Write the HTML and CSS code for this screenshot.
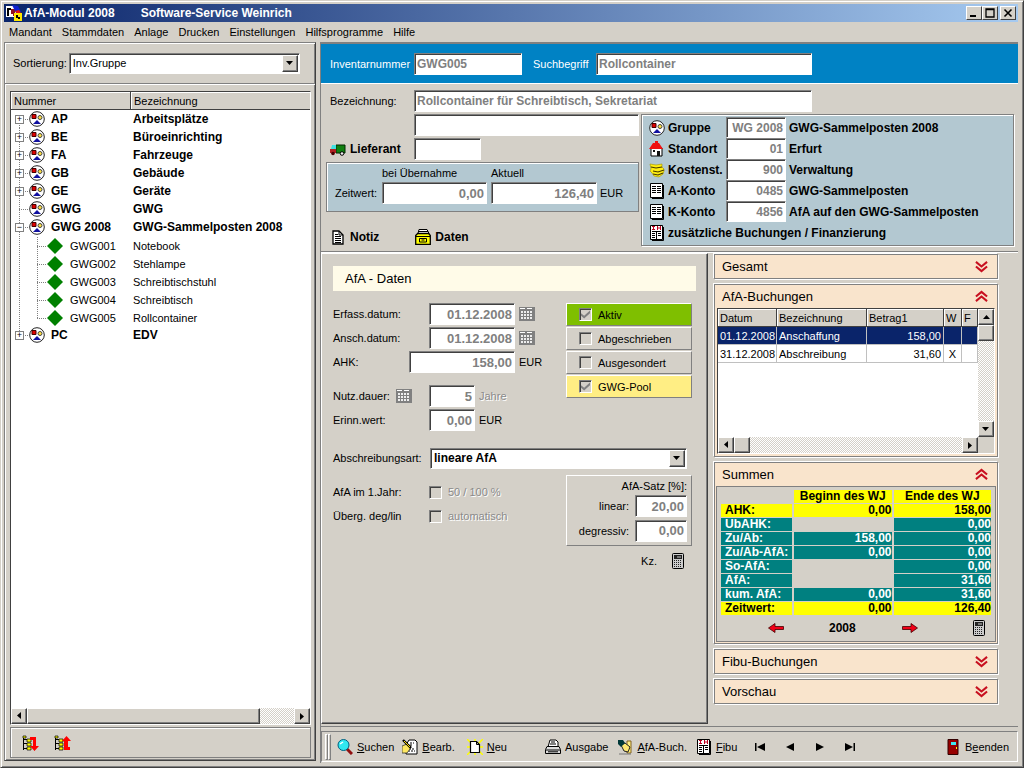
FILE: index.html
```html
<!DOCTYPE html>
<html lang="de">
<head>
<meta charset="utf-8">
<title>AfA-Modul 2008</title>
<link rel="stylesheet" href="styles.css">
</head>
<body>
<svg class="defs" aria-hidden="true">
  <symbol id="group" viewBox="0 0 16 16"><circle cx="8" cy="8" r="7.3" fill="#fff" stroke="#222"/><path d="M3 3.500h4v4H3z" fill="#e00000" stroke="#400"/><circle cx="11" cy="6.500" r="2" fill="#ffe040" stroke="#444"/><path d="M8 9l4 4H4z" fill="#1010a0"/></symbol>
  <symbol id="diamond" viewBox="0 0 16 16"><path d="M8 0l8 8-8 8-8-8z" fill="#008000"/></symbol>
  <symbol id="sheet" viewBox="0 0 16 16"><path d="M1.500.5h12v14h-12z" fill="#fff" stroke="#000"/><path d="M14.500 2v13.500H3" fill="none" stroke="#000"/><path d="M3 3.500h4m1 0h4M3 5.500h4m1 0h4M3 7.500h4m1 0h4M3 9.500h4m1 0h4" stroke="#000"/></symbol>
  <symbol id="ledger" viewBox="0 0 16 16"><path d="M1.500.5h12v14h-12z" fill="#fff" stroke="#000"/><path d="M14.500 2v13.500H3" fill="none" stroke="#000"/><path d="M3 1.500h3M4.500 1v4M3 4.500h3M8.500 1v4M11.500 1v4M8 3h4" fill="none" stroke="#c00020"/><path d="M3 6.500h9M7.500 7v7M3 8.500h3m3 0h3M3 10.500h3m3 0h3M3 12.500h3" stroke="#000"/></symbol>
  <symbol id="calendar" viewBox="0 0 16 16"><path d="M0 1h16v14H0z" fill="#808080"/><path d="M1 2h5v1H1zM8 2h5v1H8z" fill="#fff"/><path d="M2 5h2v2H2zm3 0h2v2H5zm3 0h2v2H8zm3 0h2v2h-2zM2 8h2v2H2zm3 0h2v2H5zm3 0h2v2H8zm3 0h2v2h-2zM2 11h2v2H2zm3 0h2v2H5zm3 0h2v2H8zm3 0h2v2h-2z" fill="#eee"/></symbol>
  <symbol id="calc" viewBox="0 0 12 16"><rect x=".5" y=".5" width="11" height="15" rx="1" fill="#ccc" stroke="#000"/><path d="M2 2h8v4H2z" fill="#222"/><path d="M5 4h4" stroke="#ccc"/><path d="M2 7.500h8M2 9.500h8M2 11.500h8M2 13.500h8" stroke="#222" stroke-dasharray="1 1"/></symbol>
  <symbol id="down" viewBox="0 0 14 14"><path d="M1 2l6 5 6-5M1 7l6 5 6-5" fill="none" stroke="#c81020" stroke-width="2.200"/></symbol>
  <symbol id="up" viewBox="0 0 14 14"><path d="M1 7l6-5 6 5M1 12l6-5 6 5" fill="none" stroke="#c81020" stroke-width="2.200"/></symbol>
  <symbol id="tree" viewBox="0 0 16 16"><path d="M1.500 1v14M1 4.500h4M1 8.500h4M1 13.500h4" stroke="#000" fill="none"/><path d="M1 1h3v2H1zM5 4h4v3H5zM5 8h4v3H5zM5 12h4v3H5z" fill="#ff0" stroke="#000" stroke-width=".7"/></symbol>
  <symbol id="tri" viewBox="0 0 8 8"><path d="M0 2h7L3.500 6z" fill="#000"/></symbol>
  <symbol id="arrow" viewBox="0 0 16 10"><path d="M.5 5L7 .5V3.500h8.500v3H7v3z" fill="#f00018" stroke="#400" stroke-width=".8"/></symbol>
</svg>

<header class="title">
  <svg class="logo" viewBox="0 0 16 16"><path d="M0 1h10v11H0z" fill="#fff"/><path d="M1 3h4v2H3v6H1z" fill="#000"/><path d="M5 4h4v7H7V9H5z" fill="#901020"/><path d="M6 0l6 1 3 6-5 1z" fill="#1020d0"/><path d="M9 6l4-1 2 3-3 2z" fill="#e01010"/><path d="M8 8h8v8H8z" fill="#ffe800"/><path d="M10 10h2v2h2v2h-2v-1h-2z" fill="#000"/></svg>
  <h1>AfA-Modul 2008</h1><span class="company">Software-Service Weinrich</span>
  <div class="winbtns">
    <button aria-label="Minimieren"><svg viewBox="0 0 10 10"><path d="M1 8h6" stroke="#000" stroke-width="2"/></svg></button>
    <button aria-label="Maximieren"><svg viewBox="0 0 10 10"><path d="M1 1h8v8H1zM1 1.500h8" fill="none" stroke="#000" stroke-width="1.300"/></svg></button>
    <button class="close" aria-label="Schließen"><svg viewBox="0 0 10 10"><path d="M1.500 1.500l7 7m0-7l-7 7" stroke="#000" stroke-width="1.600"/></svg></button>
  </div>
</header>
<nav class="menu"><button>Mandant</button><button>Stammdaten</button><button>Anlage</button><button>Drucken</button><button>Einstellungen</button><button>Hilfsprogramme</button><button>Hilfe</button></nav>

<main class="work">
  <aside class="side">
    <div class="sort"><label for="sort">Sortierung:</label>
      <span class="combo"><select id="sort"><option>Inv.Gruppe</option></select><span class="drop"><svg><use href="#tri"/></svg></span></span></div>
    <div class="treebox">
      <div class="treehead"><span>Nummer</span><span>Bezeichnung</span></div>
      <ul class="tree">
        <li class="first"><i class="rail"><b>+</b></i><svg><use href="#group"/></svg><strong>AP</strong><strong>Arbeitsplätze</strong></li>
        <li><i class="rail"><b>+</b></i><svg><use href="#group"/></svg><strong>BE</strong><strong>Büroeinrichting</strong></li>
        <li><i class="rail"><b>+</b></i><svg><use href="#group"/></svg><strong>FA</strong><strong>Fahrzeuge</strong></li>
        <li><i class="rail"><b>+</b></i><svg><use href="#group"/></svg><strong>GB</strong><strong>Gebäude</strong></li>
        <li><i class="rail"><b>+</b></i><svg><use href="#group"/></svg><strong>GE</strong><strong>Geräte</strong></li>
        <li><i class="rail"></i><svg><use href="#group"/></svg><strong>GWG</strong><strong>GWG</strong></li>
        <li><i class="rail"><b>−</b></i><svg><use href="#group"/></svg><strong>GWG 2008</strong><strong>GWG-Sammelposten 2008</strong></li>
        <li class="leaf"><i class="rail line"></i><i class="rail"></i><svg><use href="#diamond"/></svg><span>GWG001</span><span>Notebook</span></li>
        <li class="leaf"><i class="rail line"></i><i class="rail"></i><svg><use href="#diamond"/></svg><span>GWG002</span><span>Stehlampe</span></li>
        <li class="leaf"><i class="rail line"></i><i class="rail"></i><svg><use href="#diamond"/></svg><span>GWG003</span><span>Schreibtischstuhl</span></li>
        <li class="leaf"><i class="rail line"></i><i class="rail"></i><svg><use href="#diamond"/></svg><span>GWG004</span><span>Schreibtisch</span></li>
        <li class="leaf"><i class="rail line"></i><i class="rail end"></i><svg><use href="#diamond"/></svg><span>GWG005</span><span>Rollcontainer</span></li>
        <li><i class="rail end"><b>+</b></i><svg><use href="#group"/></svg><strong>PC</strong><strong>EDV</strong></li>
      </ul>
      <div class="hscroll"><button class="sb left" aria-label="Links"><svg><use href="#tri"/></svg></button><span class="thumb wide"></span><button class="sb right" aria-label="Rechts"><svg><use href="#tri"/></svg></button></div>
    </div>
    <div class="treetools">
      <button aria-label="Alle öffnen"><svg viewBox="0 0 17 16"><use href="#tree" width="16" height="16"/><path d="M8 2h6v9h3l-4.500 5L8 11h3V5H8z" fill="#f00"/></svg></button>
      <button aria-label="Alle schließen"><svg viewBox="0 0 17 16"><use href="#tree" width="16" height="16"/><path d="M8 6l4.500-5L17 6h-3v6h2v3h-6V6z" fill="#f00"/></svg></button>
    </div>
  </aside>

  <section class="content">
    <div class="banner"><label for="inv">Inventarnummer</label><input id="inv" class="w108" readonly value="GWG005"><label class="second" for="such">Suchbegriff</label><input id="such" class="w216" readonly value="Rollcontainer"></div>

    <div class="master">
      <div class="line"><label class="lead" for="bez">Bezeichnung:</label><input id="bez" class="w398" readonly value="Rollcontainer für Schreibtisch, Sekretariat"></div>
      <div class="halves">
        <div class="half">
          <div class="line"><span class="lead"></span><input class="grow" aria-label="Bezeichnung 2"></div>
          <div class="line"><label class="lead strong" for="lief"><svg class="ic" viewBox="0 0 16 16"><path d="M6 4h9v8H6z" fill="#108010" stroke="#002800"/><path d="M2 4h4v4H1z" fill="#40e0e0"/><path d="M0 8h6v4H0z" fill="#b02020"/><circle cx="3" cy="12.500" r="1.800" fill="#400"/><circle cx="12" cy="12.500" r="1.800" fill="#eee" stroke="#000"/></svg>Lieferant</label><input id="lief" class="w67"></div>
          <div class="values">
            <span></span><label for="ueb">bei Übernahme</label><label for="akt">Aktuell</label><span></span>
            <span>Zeitwert:</span><input id="ueb" class="num" readonly value="0,00"><input id="akt" class="num" readonly value="126,40"><span>EUR</span>
          </div>
          <div class="links">
            <button><svg class="ic" viewBox="0 0 16 16"><path d="M3 2h6l4 4v9H3z" fill="#fff" stroke="#000" stroke-width="1.300"/><path d="M9 2v4h4" fill="none" stroke="#000"/><path d="M5 5.500h3M5 7.500h6M5 9.500h6M5 11.500h6M5 13.500h6" stroke="#000"/></svg>Notiz</button>
            <button><svg class="ic" viewBox="0 0 16 16"><path d="M4 .5h8l2 4H3z" fill="#fff" stroke="#000"/><path d="M4 2.500h9" stroke="#000"/><path d="M.7 6.500l2-2h11l1.600 2v9H.7z" fill="#ff0" stroke="#000" stroke-width="1.300"/><path d="M1 7.500h14M4.500 9.500h7v3.500h-7zM6.500 11h3" fill="none" stroke="#000"/></svg>Daten</button>
          </div>
        </div>
        <div class="refs">
          <label for="r1"><svg class="ic"><use href="#group"/></svg>Gruppe</label><input id="r1" class="num" readonly value="WG 2008"><strong>GWG-Sammelposten 2008</strong>
          <label for="r2"><svg class="ic" viewBox="0 0 16 16"><path d="M2 7h11v8H2z" fill="#fff" stroke="#000"/><path d="M0 8l4-6h2V0h3v2h1l4 6z" fill="#f01010"/><path d="M4 9h2v2H4zM8 10h3v5H8z" fill="#111"/></svg>Standort</label><input id="r2" class="num" readonly value="01"><strong>Erfurt</strong>
          <label for="r3"><svg class="ic" viewBox="0 0 16 16"><path d="M1 2l6 1 6-1v3l2 2v2l-1 3-4 3-5-1-2-3-2-2 1-2z" fill="#ffee10" stroke="#a09000" stroke-width=".6"/><path d="M2 5l5 1 6-1M4 9l5 1 6-2M4 12l5 1 5-2" fill="none" stroke="#443800" stroke-width="1.200"/></svg>Kostenst.</label><input id="r3" class="num" readonly value="900"><strong>Verwaltung</strong>
          <label for="r4"><svg class="ic"><use href="#sheet"/></svg>A-Konto</label><input id="r4" class="num" readonly value="0485"><strong>GWG-Sammelposten</strong>
          <label for="r5"><svg class="ic"><use href="#sheet"/></svg>K-Konto</label><input id="r5" class="num" readonly value="4856"><strong>AfA auf den GWG-Sammelposten</strong>
          <button class="extra"><svg class="ic"><use href="#ledger"/></svg>zusätzliche Buchungen / Finanzierung</button>
        </div>
      </div>
    </div>

    <div class="lower">
      <section class="detail">
        <h2>AfA - Daten</h2>
        <div class="detailcols">
          <div class="fields">
            <div class="field"><label for="f1">Erfass.datum:</label><input id="f1" class="num w86" readonly value="01.12.2008"><svg class="ic"><use href="#calendar"/></svg></div>
            <div class="field"><label for="f2">Ansch.datum:</label><input id="f2" class="num w86" readonly value="01.12.2008"><svg class="ic"><use href="#calendar"/></svg></div>
            <div class="field"><label class="short" for="f3">AHK:</label><input id="f3" class="num w106" readonly value="158,00"><span>EUR</span></div>
            <div class="field gap"><label for="f4">Nutz.dauer: <svg class="ic"><use href="#calendar"/></svg></label><input id="f4" class="num w46" readonly value="5"><span class="dim">Jahre</span></div>
            <div class="field"><label for="f5">Erinn.wert:</label><input id="f5" class="num w46" readonly value="0,00"><span>EUR</span></div>
          </div>
          <div class="flags">
            <label class="green"><input type="checkbox" checked>Aktiv</label>
            <label><input type="checkbox">Abgeschrieben</label>
            <label><input type="checkbox">Ausgesondert</label>
            <label class="yellow"><input type="checkbox" checked>GWG-Pool</label>
          </div>
        </div>
        <div class="field method"><label for="art">Abschreibungsart:</label><span class="combo"><select id="art" class="bold"><option>lineare AfA</option></select><span class="drop"><svg><use href="#tri"/></svg></span></span></div>
        <div class="detailcols">
          <div class="fields opts">
            <div class="field"><span class="cap">AfA im 1.Jahr:</span><label class="dim"><input type="checkbox">50 / 100 %</label></div>
            <div class="field"><span class="cap">Überg. deg/lin</span><label class="dim"><input type="checkbox">automatisch</label></div>
          </div>
          <div class="ratecol">
            <div class="rates"><span class="head">AfA-Satz [%]:</span><label for="lin">linear:</label><input id="lin" class="num" readonly value="20,00"><label for="deg">degressiv:</label><input id="deg" class="num" readonly value="0,00"></div>
            <div class="kz">Kz.<button aria-label="Rechner"><svg class="calc"><use href="#calc"/></svg></button></div>
          </div>
        </div>
      </section>

      <aside class="cards">
        <section class="card"><button class="cardhead">Gesamt<svg><use href="#down"/></svg></button></section>
        <section class="card"><button class="cardhead">AfA-Buchungen<svg><use href="#up"/></svg></button>
          <div class="grid">
            <div class="gridmain">
              <table class="bookings">
                <colgroup><col class="c1"><col class="c2"><col class="c3"><col class="c4"><col></colgroup>
                <thead><tr><th>Datum</th><th>Bezeichnung</th><th>Betrag1</th><th>W</th><th>F</th></tr></thead>
                <tbody><tr class="sel"><td>01.12.2008</td><td>Anschaffung</td><td class="r">158,00</td><td></td><td></td></tr>
                <tr><td>31.12.2008</td><td>Abschreibung</td><td class="r">31,60</td><td class="c">X</td><td></td></tr></tbody>
              </table>
              <div class="hscroll"><button class="sb left" aria-label="Links"><svg><use href="#tri"/></svg></button><span class="thumb"></span><button class="sb right" aria-label="Rechts"><svg><use href="#tri"/></svg></button></div>
            </div>
            <div class="vscroll"><button class="sb top" aria-label="Hoch"><svg><use href="#tri"/></svg></button><span class="thumb"></span><button class="sb bottom" aria-label="Runter"><svg><use href="#tri"/></svg></button></div>
          </div>
        </section>
        <section class="card"><button class="cardhead">Summen<svg><use href="#up"/></svg></button>
          <div class="sums">
            <table>
              <tr class="y"><td class="none"></td><th scope="col">Beginn des WJ</th><th scope="col">Ende des WJ</th></tr>
              <tr class="y"><th>AHK:</th><td>0,00</td><td>158,00</td></tr>
              <tr><th>UbAHK:</th><td class="none"></td><td>0,00</td></tr>
              <tr><th>Zu/Ab:</th><td>158,00</td><td>0,00</td></tr>
              <tr><th>Zu/Ab-AfA:</th><td>0,00</td><td>0,00</td></tr>
              <tr><th>So-AfA:</th><td class="none"></td><td>0,00</td></tr>
              <tr><th>AfA:</th><td class="none"></td><td>31,60</td></tr>
              <tr><th>kum. AfA:</th><td>0,00</td><td>31,60</td></tr>
              <tr class="y"><th>Zeitwert:</th><td>0,00</td><td>126,40</td></tr>
            </table>
            <div class="year"><button aria-label="Vorjahr"><svg class="arr"><use href="#arrow"/></svg></button><strong>2008</strong><button aria-label="Folgejahr"><svg class="arr flip"><use href="#arrow"/></svg></button><button class="last" aria-label="Rechner"><svg class="calc"><use href="#calc"/></svg></button></div>
          </div>
        </section>
        <section class="card"><button class="cardhead">Fibu-Buchungen<svg><use href="#down"/></svg></button></section>
        <section class="card"><button class="cardhead">Vorschau<svg><use href="#down"/></svg></button></section>
      </aside>
    </div>

    <footer class="tools">
      <i class="grip"></i><i class="grip"></i>
      <button class="t1"><svg class="ic" viewBox="0 0 16 16"><path d="M10 10l5 5" stroke="#901010" stroke-width="3"/><circle cx="6.500" cy="6" r="5.500" fill="#30e8f0" stroke="#006080"/><path d="M3 5l3-2" stroke="#fff" stroke-width="1.500"/></svg><span><u>S</u>uchen</span></button>
      <button class="t2"><svg class="ic" viewBox="0 0 16 16"><path d="M7 1h6l2 2v12H4V6z" fill="#fff" stroke="#000"/><path d="M8 4h4M8 6h3M7 10h6M6 12h7" stroke="#000" stroke-dasharray="2 1"/><path d="M0 7l5-2 4 2-1 3-3 4H0z" fill="#ffe860" stroke="#333" stroke-width=".8"/><path d="M1 1l8 8" stroke="#000" stroke-width="2.400"/><path d="M2 2l6 6" stroke="#ffe000"/></svg><span><u>B</u>earb.</span></button>
      <button class="t3"><svg class="ic" viewBox="0 0 16 16"><path d="M0 0l16 16M16 0L0 16M8 0v16M0 8h16" stroke="#ff0" stroke-width="1.500"/><path d="M3.500 2.500h6l3 3v8h-9z" fill="#fff" stroke="#000" stroke-width="1.200"/><path d="M9.500 2.500v3h3" fill="none" stroke="#000"/></svg><span><u>N</u>eu</span></button>
      <button class="t4"><svg class="ic" viewBox="0 0 16 16"><path d="M5 1h6l2 2v5H3z" fill="#fff" stroke="#000"/><path d="M6 3h4M5 5h6" stroke="#000"/><path d="M2 7.500h12l1.500 3v4H.5v-4z" fill="#ddd" stroke="#000"/><path d="M1 11h14M3 12.800h10" stroke="#000"/></svg><span>Aus<u>g</u>abe</span></button>
      <button class="t5"><svg class="ic" viewBox="0 0 16 16"><path d="M10 2h4v12h-4z" fill="#fff080" stroke="#806020"/><path d="M4 6l4-2 5 4-2 5-4-1z" fill="#ffe870" stroke="#222"/><path d="M1 1h5l2 3-4 4-3-3z" fill="#003838"/><path d="M2 15h12" stroke="#777"/></svg><span><u>A</u>fA-Buch.</span></button>
      <button class="t6"><svg class="ic"><use href="#ledger"/></svg><span><u>F</u>ibu</span></button>
      <div class="navset">
        <button aria-label="Erster"><svg viewBox="0 0 12 8"><path d="M1 0h1.500v8H1zM11 0v8L3 4z"/></svg></button>
        <button aria-label="Zurück"><svg viewBox="0 0 12 8"><path d="M10 0v8L2 4z"/></svg></button>
        <button aria-label="Weiter"><svg viewBox="0 0 12 8"><path d="M2 0v8l8-4z"/></svg></button>
        <button aria-label="Letzter"><svg viewBox="0 0 12 8"><path d="M1 0v8l8-4zM9.500 0H11v8H9.500z"/></svg></button>
      </div>
      <button class="exit"><svg class="ic" viewBox="0 0 16 16"><path d="M3 .5h10v15H3z" fill="#980000" stroke="#300"/><path d="M6 3h5v3H6z" fill="#40e8f0"/><path d="M11 8h1v2h-1z" fill="#ff0"/></svg><span>B<u>e</u>enden</span></button>
    </footer>
  </section>
</main>
</body>
</html>
```

FILE: styles.css
```css
:root {
  --face: #d4d0c8;
  --shade: #808080;
  --dark: #404040;
  --pane: #b3c8d1;
  --navy: #0a246a;
}

* { box-sizing: border-box; }

body {
  margin: 0;
  min-height: 100vh;
  padding: 3px 5px 4px 3px;
  border: 1px solid;
  border-color: var(--face) var(--dark) var(--dark) var(--face);
  box-shadow: inset 1px 1px 0 #fff, inset -1px -1px 0 var(--shade);
  background: var(--face);
  color: #000;
  font: 11px/14px "Liberation Sans", Arial, sans-serif;
  display: flex;
  flex-direction: column;
}

button, input, select { font: inherit; color: inherit; }
button { margin: 0; padding: 0; border: 0; background: none; }
svg { display: block; flex: none; }
label, button { white-space: nowrap; }
strong, .strong { font-weight: bold; font-size: 12px; }
.defs { position: absolute; width: 0; height: 0; }
.ic { width: 16px; height: 16px; }
.calc { width: 12px; height: 16px; }

/* title and menu */
.title {
  display: flex;
  align-items: center;
  height: 18px;
  padding: 0 2px;
  background: linear-gradient(90deg, #0a246a, #a6caf0);
  color: #fff;
  font-weight: bold;
  font-size: 12px;
}
.logo { width: 16px; height: 16px; margin-right: 2px; }
.title h1 { margin: 0; font-size: 12px; }
.company { margin-left: 26px; }
.winbtns { display: flex; margin-left: auto; }
.winbtns button {
  width: 16px;
  height: 14px;
  display: grid;
  place-items: center;
  background: var(--face);
  border: 1px solid;
  border-color: #fff var(--dark) var(--dark) #fff;
}
.winbtns svg { width: 10px; height: 10px; }
.winbtns .close { margin-left: 2px; }

.menu { display: flex; align-items: center; height: 20px; padding-left: 5px; gap: 10px; }

.work { flex: 1; display: flex; gap: 4px; min-height: 0; }

/* left pane */
.side {
  width: 312px;
  display: flex;
  flex-direction: column;
  margin-bottom: 2px;
  border: 1px solid;
  border-color: var(--shade) var(--dark) var(--dark) var(--shade);
  box-shadow: inset 1px 1px 0 #fff, inset -1px -1px 0 var(--shade);
}
.sort {
  display: flex;
  align-items: center;
  gap: 2px;
  height: 41px;
  padding: 0 15px 0 8px;
  border-bottom: 1px solid var(--shade);
  box-shadow: 0 1px 0 #fff;
}
.combo { position: relative; flex: 1; display: flex; }
.combo select {
  appearance: none;
  width: 100%;
  height: 21px;
  padding: 0 20px 0 3px;
  border: 1px solid;
  border-color: var(--shade) #fff #fff var(--shade);
  border-radius: 0;
  box-shadow: inset 1px 1px 0 var(--dark);
  background: #fff;
  font-size: 11px;
}
.combo .bold { font-weight: bold; font-size: 12px; }
.drop {
  position: absolute;
  top: 2px;
  right: 2px;
  bottom: 2px;
  width: 16px;
  display: grid;
  place-items: center;
  pointer-events: none;
}
.drop, .sb, .thumb {
  background: var(--face);
  border: 1px solid;
  border-color: #fff var(--dark) var(--dark) #fff;
  box-shadow: inset -1px -1px 0 var(--shade);
}
.drop svg, .sb svg { width: 8px; height: 8px; }

.treebox {
  flex: 1;
  display: flex;
  flex-direction: column;
  margin: 7px 4px 0 5px;
  border: 1px solid;
  border-color: var(--dark) #fff #fff var(--dark);
  background: #fff;
}
.treehead { display: flex; height: 18px; background: var(--face); border-bottom: 1px solid var(--dark); }
.treehead span { padding: 2px 3px; box-shadow: inset 1px 1px 0 #fff; }
.treehead span:first-child { width: 120px; border-right: 1px solid var(--dark); }
.treehead span:last-child { flex: 1; }
.tree { flex: 1; margin: 0; padding: 0; list-style: none; }
.tree li { display: grid; grid-template-columns: 18px 18px 86px 1fr; align-items: center; height: 18px; line-height: 16px; }
.tree .leaf { grid-template-columns: 18px 18px 20px 66px 1fr; }
.tree svg { width: 16px; height: 16px; }
.tree strong:nth-of-type(1) { padding-left: 4px; }
.leaf span:nth-of-type(1) { padding-left: 3px; }
.rail {
  height: 18px;
  display: flex;
  align-items: center;
  padding-left: 4px;
  background:
    repeating-linear-gradient(180deg, #808080 0 1px, transparent 1px 2px) 8px 0 / 1px 100% no-repeat,
    repeating-linear-gradient(90deg, #808080 0 1px, transparent 1px 2px) 8px 9px / 10px 1px no-repeat;
}
.rail.line { background-size: 1px 100%, 0 0; }
.rail.end { background-size: 1px 9px, 10px 1px; }
.first .rail { background-position: 8px 9px, 8px 9px; }
.rail b {
  width: 9px;
  height: 9px;
  border: 1px solid var(--shade);
  background: #fff;
  font: 9px/7px "Liberation Sans", sans-serif;
  text-align: center;
}

.hscroll, .vscroll {
  display: flex;
  background: repeating-conic-gradient(#fff 0 25%, #d4d0c8 0 50%) 0 0 / 2px 2px;
}
.hscroll { height: 16px; }
.vscroll { width: 16px; flex-direction: column; }
.sb { width: 16px; height: 16px; display: grid; place-items: center; }
.left svg { transform: rotate(90deg); }
.right svg { transform: rotate(-90deg); }
.top svg { transform: rotate(180deg); }
.right { margin-left: auto; }
.bottom { margin-top: auto; }
.thumb { width: 16px; height: 16px; }
.thumb.wide { width: 78%; }

.treetools {
  display: flex;
  align-items: center;
  gap: 15px;
  height: 31px;
  margin: 2px 4px 2px 5px;
  padding-left: 11px;
  border: 1px solid var(--shade);
  box-shadow: inset 1px 1px 0 #fff;
}
.treetools svg { width: 17px; height: 16px; }

/* right side */
.content { flex: 1; min-width: 0; display: flex; flex-direction: column; border-left: 1px solid var(--shade); }
.content input:not([type]) {
  min-width: 0;
  height: 22px;
  padding: 0 2px;
  border: 1px solid;
  border-color: var(--shade) #fff #fff var(--shade);
  border-radius: 0;
  box-shadow: inset 1px 1px 0 var(--dark);
  background: #fff;
  color: #808080;
  font-weight: bold;
  font-size: 12px;
}
.content input.num { font-size: 13px; text-align: right; }
.w108 { width: 108px; }
.w216 { width: 216px; }
.w398 { width: 398px; }
.w106 { width: 106px; }
.w86 { width: 86px; }
.w67 { width: 67px; }
.w46 { width: 46px; }
.grow { flex: 1; }

.banner {
  display: flex;
  align-items: center;
  height: 42px;
  padding-left: 9px;
  border-top: 2px solid var(--shade);
  border-bottom: 1px solid #fff;
  background: #0082c4;
  color: #fff;
}
.banner label { width: 84px; }
.banner .second { width: 74px; padding-left: 11px; }

.master { padding: 6px 4px 5px 5px; border-bottom: 1px solid var(--shade); }
.line { display: flex; align-items: center; margin-bottom: 2px; }
.lead { width: 88px; padding-left: 4px; display: flex; align-items: center; gap: 4px; }
.halves { display: flex; gap: 2px; }
.half { width: 313px; }
.values {
  display: grid;
  grid-template-columns: 43px 105px 106px 1fr;
  column-gap: 4px;
  align-items: center;
  height: 50px;
  margin-top: 1px;
  padding: 2px 2px 6px 8px;
  border: 1px solid var(--shade);
  box-shadow: inset 1px 1px 0 #fff;
  background: var(--pane);
}
.values > span:last-child { margin-left: -1px; }
.links { display: flex; gap: 36px; padding: 17px 0 0 4px; }
.links button { display: flex; align-items: center; gap: 4px; font-size: 12px; font-weight: bold; }
.refs {
  flex: 1;
  display: grid;
  grid-template-columns: 74px 60px 1fr;
  grid-auto-rows: 21px;
  column-gap: 3px;
  align-items: center;
  padding: 2px 7px;
  border: 1px solid var(--shade);
  box-shadow: inset 1px 1px 0 #fff, 1px 1px 0 #fff;
  background: var(--pane);
}
.refs label, .extra { display: flex; align-items: center; gap: 3px; font-size: 12px; font-weight: bold; }
.content .refs input { height: 21px; font-size: 12px; }
.extra { grid-column: 1 / -1; }

.lower { flex: 1; display: flex; gap: 6px; border-top: 1px solid #fff; padding-bottom: 2px; border-bottom: 1px solid var(--shade); }
.detail {
  flex: 1;
  padding: 12px 11px;
  border: 1px solid;
  border-color: #fff var(--dark) var(--dark) #fff;
  box-shadow: inset -1px -1px 0 var(--shade);
}
.detail h2 { margin: 0 0 12px; padding: 5px 12px 4px; background: #fffbe8; font-size: 13px; line-height: 16px; font-weight: normal; }
.detailcols { display: flex; justify-content: space-between; padding-right: 4px; }
.field { display: flex; align-items: center; min-height: 22px; margin-bottom: 2px; }
.field label { width: 96px; display: flex; align-items: center; gap: 6px; }
.field .short { width: 76px; }
.field > span, .field > .ic { margin-left: 4px; }
.field.gap { margin-top: 12px; }
.dim { color: #8a8a8a; text-shadow: 1px 1px 0 #fff; }
.flags { width: 126px; display: flex; flex-direction: column; gap: 1px; }
.flags label {
  display: flex;
  align-items: center;
  gap: 6px;
  height: 23px;
  padding-left: 12px;
  border: 1px solid;
  border-color: #fff var(--shade) var(--shade) #fff;
}
.flags .green { background: #7fbf00; }
.flags .yellow { background: #ffee84; }
input[type="checkbox"] {
  appearance: none;
  width: 13px;
  height: 13px;
  margin: 0;
  border: 1px solid;
  border-color: var(--shade) #fff #fff var(--shade);
  box-shadow: inset 1px 1px 0 var(--dark);
  background: var(--face);
}
input[type="checkbox"]:checked::before {
  content: "";
  display: block;
  width: 9px;
  height: 9px;
  margin: 1px;
  background: #808080;
  clip-path: polygon(0 35%, 35% 65%, 100% 5%, 100% 35%, 35% 95%, 0 65%);
}
.field.method { margin: 14px 9px 6px 0; }
.field.method .combo { margin-left: 1px; }
.opts { padding-top: 6px; }
.opts .field .cap { width: 96px; margin: 0; }
.opts .field label { gap: 6px; }
.ratecol { width: 126px; }
.rates {
  display: grid;
  grid-template-columns: 1fr 52px;
  column-gap: 6px;
  row-gap: 2px;
  align-items: center;
  justify-items: end;
  height: 71px;
  padding: 3px 4px;
  border: 1px solid;
  border-color: #fff var(--shade) var(--shade) #fff;
}
.rates .head { grid-column: 1 / -1; }
.rates input { width: 52px; }
.kz { display: flex; align-items: center; justify-content: flex-end; gap: 15px; padding: 7px 8px 0 0; }

/* accordion */
.cards { width: 304px; padding: 1px 20px 0 0; display: flex; flex-direction: column; gap: 5px; }
.card { border: 1px solid var(--shade); background: #f9e4cc; box-shadow: 1px 1px 0 #fff, -1px -1px 0 #fff; }
.cardhead {
  display: flex;
  align-items: center;
  justify-content: space-between;
  width: 100%;
  height: 23px;
  padding: 0 9px 0 7px;
  font-size: 13px;
}
.cardhead svg { width: 13px; height: 13px; }
.grid { display: flex; height: 146px; margin: 0 2px 2px; border: 1px solid; border-color: var(--dark) #fff #fff var(--dark); background: var(--face); }
.gridmain { flex: 1; display: flex; flex-direction: column; justify-content: space-between; background: #fff; }
.vscroll { margin-bottom: 16px; }
.bookings { width: 100%; table-layout: fixed; border-collapse: separate; border-spacing: 0; }
.c1 { width: 59px; }
.c2 { width: 90px; }
.c3 { width: 77px; }
.c4 { width: 18px; }
.bookings th, .bookings td { height: 18px; padding: 0 2px; overflow: hidden; text-align: left; font-weight: normal; white-space: nowrap; }
.bookings th { background: var(--face); border-right: 1px solid var(--dark); border-bottom: 1px solid var(--dark); box-shadow: inset 1px 1px 0 #fff; }
.bookings td { border-right: 1px solid #c0c0c0; border-bottom: 1px solid #c0c0c0; }
.bookings td:first-child { padding-right: 0; }
.bookings .sel { background: var(--navy); color: #fff; }
.bookings .r { text-align: right; }
.bookings .c { text-align: center; }

.sums { padding: 3px 2px 1px; margin: 0 1px 1px; border: 1px solid var(--shade); background: var(--face); }
.sums table { width: 100%; table-layout: fixed; border-spacing: 2px 1px; margin-top: -1px; font-weight: bold; font-size: 12px; line-height: 13px; }
.sums th, .sums td { height: 13px; padding: 0; background: #008080; color: #fff; text-align: right; }
.sums th { text-align: left; padding-left: 4px; white-space: nowrap; }
.sums tr > :first-child { width: 71px; }
.sums th[scope] { text-align: center; padding: 0; }
.sums .y > * { background: #ff0; color: #000; }
.sums tr .none { background: none; }
.year { display: flex; align-items: center; height: 24px; padding: 0 8px 0 49px; }
.year strong { margin: 0 46px 0 45px; }
.arr { width: 16px; height: 10px; }
.flip { transform: scaleX(-1); }
.year .last { margin-left: auto; }

/* bottom bar */
.tools {
  display: flex;
  align-items: center;
  height: 31px;
  margin: 4px 0 1px;
  padding: 0 8px 0 3px;
  border: 1px solid;
  border-color: var(--shade) #fff #fff var(--shade);
}
.tools button { display: flex; align-items: center; gap: 4px; }
.grip { width: 3px; height: 26px; border: 1px solid; border-color: #fff var(--shade) var(--shade) #fff; }
.t1 { margin-left: 6px; }
.tools .t2 { margin-left: 8px; }
.tools .t3 { margin-left: 12px; }
.tools .t4 { margin-left: 38px; }
.tools .t5 { margin-left: 9px; }
.tools .t6 { margin-left: 9px; }
.navset { display: flex; gap: 18px; margin-left: 17px; }
.navset svg { width: 12px; height: 8px; }
.tools .exit { margin-left: auto; }
```
